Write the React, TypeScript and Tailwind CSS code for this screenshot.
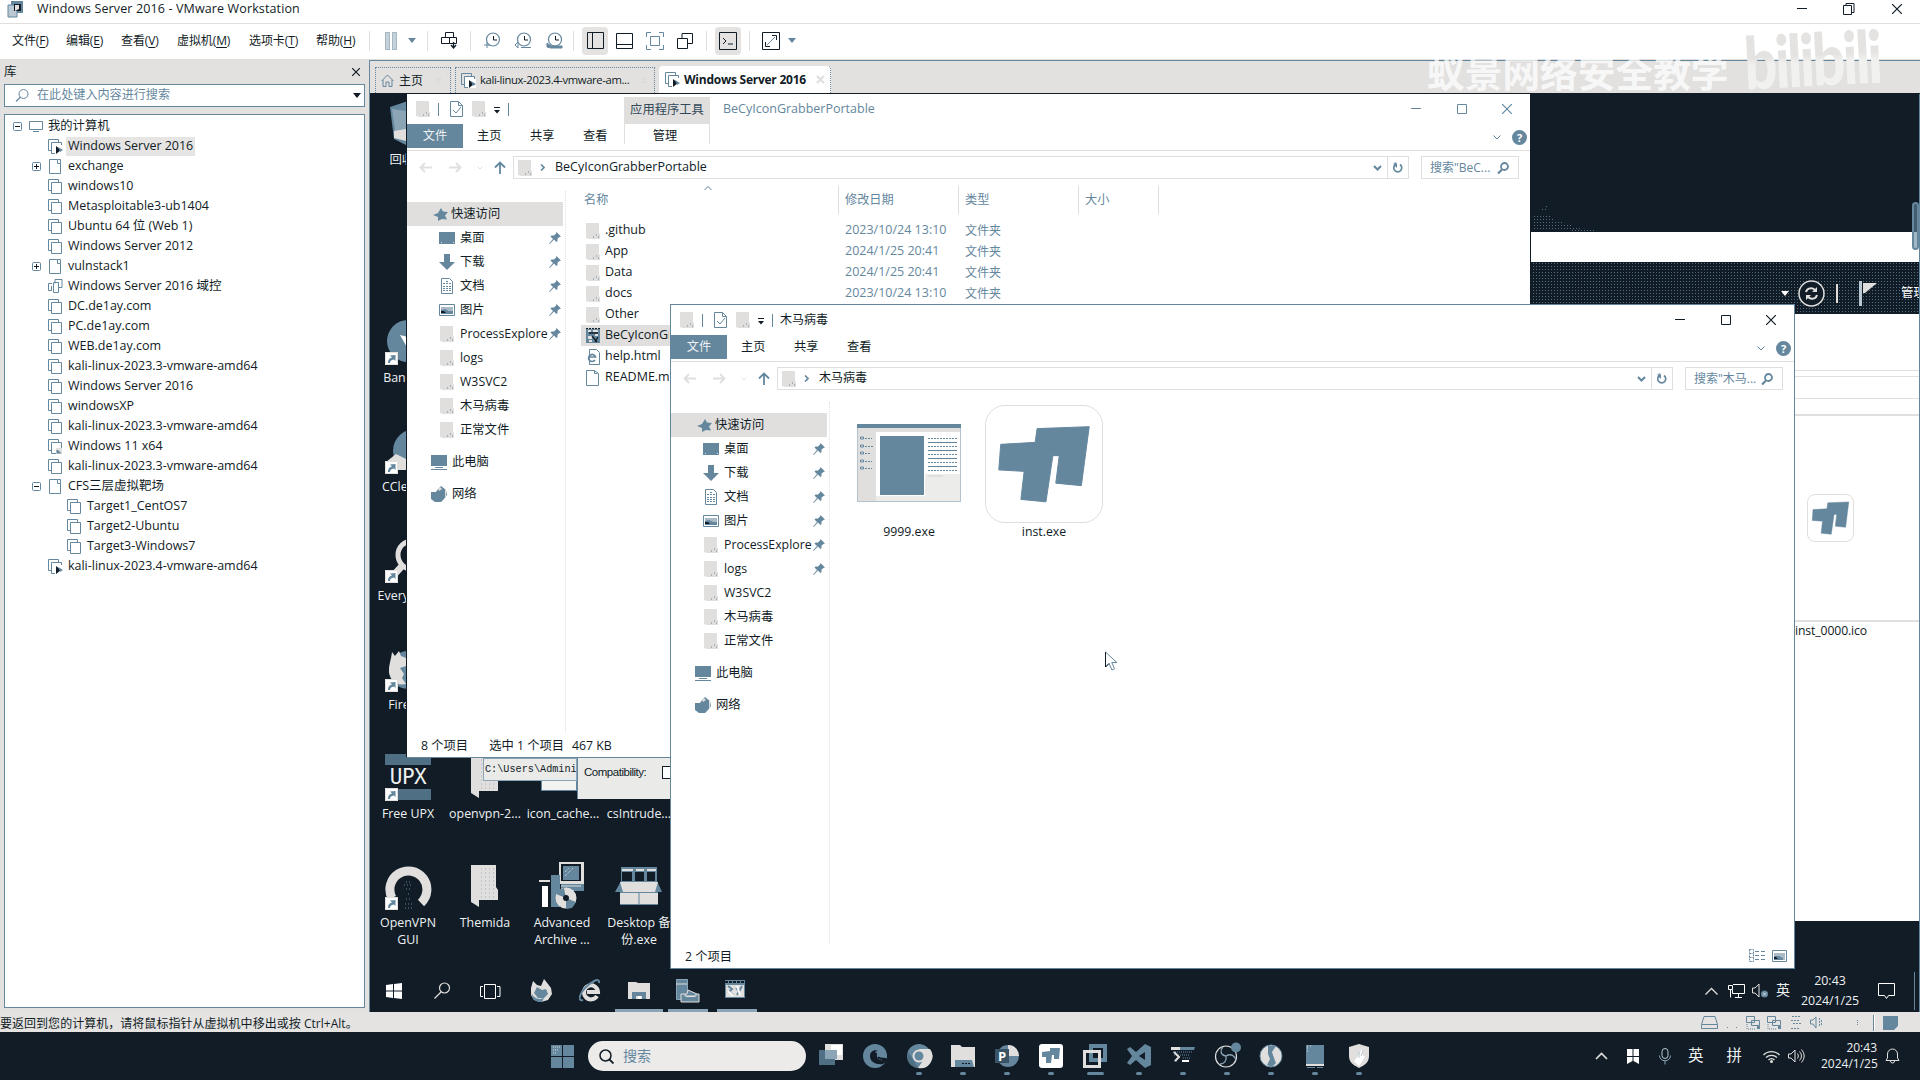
import type { ReactNode } from "react";

const B = "#64879e";
const G = "#e0dfdd";
const D = "#111c26";

type SvgProps = { w: number; h: number; children: ReactNode; className?: string };
function Svg({ w, h, children, className = "" }: SvgProps) {
  return (
    <svg width={w} height={h} viewBox={`0 0 ${w} ${h}`} fill="none" className={"shrink-0 " + className}>
      {children}
    </svg>
  );
}

/* ---------- shared small icons ---------- */
function Folder({ className = "" }: { className?: string }) {
  return (
    <Svg w={14} h={16} className={className}>
      <path d="M0 0h13v10l1 1v5H3L0 15z" fill={G} />
      <path d="M7 14h1M10 12h1M12 14h1" stroke={B} />
    </Svg>
  );
}
function CheckDoc() {
  return (
    <Svg w={13} h={16}>
      <path d="M.5.5h8l4 4v11H.5z" stroke={B} />
      <path d="M8.500 .5v4h4M3 9l3 3 5-6" stroke={B} />
    </Svg>
  );
}
function Pin() {
  return (
    <Svg w={12} h={12}>
      <path d="M7.500 0L12 4.500l-1.500.5-2 1.500v2.500l-1 1L5 7.500.5 12 0 11.500 4 7 1.500 4.500l1-1H5L7 1.500z" fill={B} />
    </Svg>
  );
}
function Caret({ color = D }: { color?: string }) {
  return (
    <Svg w={8} h={5}>
      <path d="M0 0h8L4 5z" fill={color} />
    </Svg>
  );
}
function MinIcon({ color }: { color: string }) {
  return (
    <Svg w={10} h={10}>
      <path d="M0 4.500h10" stroke={color} />
    </Svg>
  );
}
function MaxIcon({ color }: { color: string }) {
  return (
    <Svg w={10} h={10}>
      <path d="M.5.5h9v9h-9z" stroke={color} />
    </Svg>
  );
}
function CloseIcon({ color, s = 10 }: { color: string; s?: number }) {
  return (
    <Svg w={s} h={s}>
      <path d={`M0 0L${s} ${s}M${s} 0L0 ${s}`} stroke={color} strokeWidth="1.200" />
    </Svg>
  );
}
function Logo({ w, h }: { w: number; h: number }) {
  return (
    <svg width={w} height={h} viewBox="985 405 118 118" fill="none" preserveAspectRatio="none" className="shrink-0">
      <path
        d="M1000 444l35-2 2-14 53-2-8 60-26-2.500 3.500-28h-6.500l-7 47-25.500-2.500 3.300-28.500-25.800-1.500z"
        fill={B}
        stroke={B}
        strokeWidth="1"
        strokeLinejoin="round"
      />
    </svg>
  );
}

/* ---------- VMware library tree ---------- */
function VmIcon({ play = false, lock = false }: { play?: boolean; lock?: boolean }) {
  return (
    <Svg w={15} h={15}>
      <path d="M3 11.500H.5V.5h10V3" stroke={B} />
      <path d="M3.500 3.500h10v11h-10z" stroke={B} fill="#fff" />
      {play && <path d="M7 6h8v9H7z" fill="#fff" />}
      {play && <path d="M8 7l5 4-5 4z" fill={D} />}
      {play && <path d="M10 8l5 3-3 2z" fill={B} />}
      {lock && <path d="M8 9h6v6H8z" fill={G} />}
      {lock && <path d="M8.500 11v3.500h5L10 11z" fill={B} />}
    </Svg>
  );
}
function GroupIcon() {
  return (
    <Svg w={15} h={15}>
      <path d="M4 4.500H.5v7h3M3.500 12V7M7 4.500V.500h7v8h-3M5.500 3.500h5v10h-5z" stroke={B} />
    </Svg>
  );
}
function FolderOutline() {
  return (
    <Svg w={15} h={15}>
      <path d="M1.500.500h8v4h3v10h-11zM9.500.500h3v4" stroke={B} />
    </Svg>
  );
}
function Toggle({ open }: { open: boolean }) {
  return (
    <Svg w={9} h={9}>
      <rect x=".5" y=".5" width="8" height="8" rx="1" stroke={B} />
      <path d={open ? "M2 4.500h5" : "M2 4.500h5M4.500 2v5"} stroke={D} />
    </Svg>
  );
}

type Node = { t: string; k?: "play" | "lock" | "group" | "folder"; open?: boolean; sub?: boolean; sel?: boolean };
const tree: Node[] = [
  { t: "Windows Server 2016", k: "play", sel: true },
  { t: "exchange", k: "folder", open: false },
  { t: "windows10" },
  { t: "Metasploitable3-ub1404" },
  { t: "Ubuntu 64 位 (Web 1)" },
  { t: "Windows Server 2012" },
  { t: "vulnstack1", k: "folder", open: false },
  { t: "Windows Server 2016 域控", k: "group" },
  { t: "DC.de1ay.com" },
  { t: "PC.de1ay.com" },
  { t: "WEB.de1ay.com" },
  { t: "kali-linux-2023.3-vmware-amd64" },
  { t: "Windows Server 2016" },
  { t: "windowsXP" },
  { t: "kali-linux-2023.3-vmware-amd64" },
  { t: "Windows 11 x64", k: "lock" },
  { t: "kali-linux-2023.3-vmware-amd64" },
  { t: "CFS三层虚拟靶场", k: "folder", open: true },
  { t: "Target1_CentOS7", sub: true },
  { t: "Target2-Ubuntu", sub: true },
  { t: "Target3-Windows7", sub: true },
  { t: "kali-linux-2023.4-vmware-amd64", k: "play" },
];

function Library() {
  return (
    <aside className="flex h-[952px] w-[369px] shrink-0 flex-col bg-[#e2e1df] pl-1">
      <div className="flex h-6 items-center justify-between pr-[9px]">
        <span className="text-[12.500px]">库</span>
        <CloseIcon color={D} s={8} />
      </div>
      <div className="flex h-[23px] w-[361px] items-center border border-[#64879e] bg-white pl-2.5 pr-[3px]">
        <Svg w={14} h={13}>
          <circle cx="8.500" cy="5" r="4.500" stroke={B} />
          <path d="M5.500 8L1 12.500" stroke={B} strokeWidth="1.300" />
        </Svg>
        <span className="ml-2 flex-1 text-[12.100px] text-[#64879e]">在此处键入内容进行搜索</span>
        <Caret />
      </div>
      <div className="mt-[7px] h-[894px] w-[361px] border border-[#64879e] bg-white pt-px">
        <div className="flex h-5 items-center pl-2">
          <Toggle open />
          <Svg w={14} h={11} className="ml-[7px]">
            <path d="M.5.5h13v8H.5zM4 10.500h6" stroke={B} />
          </Svg>
          <span className="ml-[5px] text-[12.300px]">我的计算机</span>
        </div>
        {tree.map((n, i) => (
          <div key={i} className={"flex h-5 items-center " + (n.sub ? "pl-[62px]" : "pl-[27px]")}>
            {!n.sub && (
              <span className="flex w-4 shrink-0">{n.open !== undefined && <Toggle open={n.open} />}</span>
            )}
            {n.k === "group" ? (
              <GroupIcon />
            ) : n.k === "folder" ? (
              <FolderOutline />
            ) : (
              <VmIcon play={n.k === "play"} lock={n.k === "lock"} />
            )}
            <span
              className={
                "ml-[3px] h-[19px] whitespace-nowrap px-0.5 text-[12.500px] leading-[18px] tracking-[-0.020px] " +
                (n.sel ? "bg-[#e6e5e4]" : "")
              }
            >
              {n.t}
            </span>
          </div>
        ))}
      </div>
    </aside>
  );
}

/* ---------- VMware top bars ---------- */
const menus: [string, string, string][] = [
  ["文件", "F", "w-[54px]"],
  ["编辑", "E", "w-[55px]"],
  ["查看", "V", "w-[56px]"],
  ["虚拟机", "M", "w-[72px]"],
  ["选项卡", "T", "w-[67px]"],
  ["帮助", "H", "w-[53px]"],
];
function Sep({ className = "" }: { className?: string }) {
  return <span className={"h-5 w-px shrink-0 bg-[#e0dfdd] " + className} />;
}
function Clock({ children }: { children: ReactNode }) {
  return (
    <Svg w={17} h={17}>
      <circle cx="9" cy="7.500" r="6.500" stroke={B} strokeWidth="1.200" />
      <path d="M9.500 4v4H13" stroke={D} />
      {children}
    </Svg>
  );
}
function MenuBar() {
  return (
    <div className="flex h-9 items-center border-b border-[#e0dfdd] bg-white pb-0.5 pl-3">
      {menus.map(([a, b, w]) => (
        <span key={b} className={"shrink-0 whitespace-nowrap text-[12px] tracking-[-0.100px] " + w}>
          {a}(<span className="underline underline-offset-2">{b}</span>)
        </span>
      ))}
      <Sep />
      <Svg w={12} h={18} className="ml-[15px]">
        <path d="M.5.5h4v17h-4zM7.500.500h4v17h-4z" stroke={B} strokeDasharray="1 1" fill="#c5d0d8" />
      </Svg>
      <span className="ml-[11px]">
        <Caret color={B} />
      </span>
      <Sep className="ml-[11px]" />
      <Svg w={17} h={17} className="ml-[13px]">
        <path d="M4.500.500h8v5h-8zM.5 5.500h8v6h-8zM8.500 5.500h7v6h-7z" stroke={D} />
        <path d="M12.500 10v6M10 13l2.500 3 2.500-3" stroke={D} strokeWidth="1.300" />
      </Svg>
      <Sep className="ml-3" />
      <span className="ml-[13px] flex gap-[14px]">
        <Clock>
          <path d="M0 13h6M3 10v6" stroke={B} />
        </Clock>
        <Clock>
          <path d="M6 15.500h10M0 13l3-3v6z" stroke={B} />
        </Clock>
        <Clock>
          <path d="M1 11l4 3h11v2H5l-4-1z" fill={B} stroke={B} />
        </Clock>
      </span>
      <Sep className="ml-[10px]" />
      <span className="ml-2 flex h-7 w-[26px] shrink-0 items-center justify-center rounded-sm bg-[#e4e3e1]">
        <Svg w={17} h={17}>
          <path d="M.5.5h16v16H.5zM5.500.500v16" stroke={D} />
        </Svg>
      </span>
      <Svg w={17} h={16} className="ml-2">
        <path d="M.5.5h16v15H.5zM.5 11.500h16" stroke={D} />
      </Svg>
      <Svg w={18} h={18} className="ml-[13px]">
        <path d="M.5 5V.500H5M13 .5h4.500V5M17.500 13v4.500H13M5 17.500H.5V13M4.500 4.500h9v9h-9z" stroke={B} />
      </Svg>
      <Svg w={16} h={16} className="ml-[13px]">
        <path d="M.5 5.500h10v10H.5zM5 5V.500h10.500v10H11" stroke={D} />
      </Svg>
      <Sep className="ml-[13px]" />
      <span className="ml-2 flex h-7 w-[26px] shrink-0 items-center justify-center rounded-sm bg-[#e4e3e1]">
        <Svg w={18} h={18}>
          <path d="M.5.5h17v17H.5z" stroke={D} />
          <path d="M4 6l3 3-3 3M9 12h5" stroke={D} />
        </Svg>
      </span>
      <Sep className="ml-2" />
      <Svg w={18} h={18} className="ml-3">
        <path d="M.5.5h17v17H.5z" stroke={D} />
        <path d="M10 3.500h4.500V8M3.500 10v4.500H8" stroke={D} />
        <path d="M5 13L13 5" stroke={B} />
      </Svg>
      <span className="ml-2">
        <Caret color={B} />
      </span>
    </div>
  );
}
function TitleBar() {
  return (
    <div className="flex h-6 items-center border-b border-[#e0dfdd] bg-white pl-[7px]">
      <Svg w={16} h={17} className="-mt-1">
        <path d="M4 0h12v12H4z" fill={B} />
        <path d="M1 4h9v12H1z" fill="#b9c8d2" stroke={B} />
        <path d="M7 3h7v7H7z" fill={D} />
        <path d="M8 4h4v4l-4 2z" fill={G} />
      </Svg>
      <span className="-mt-[5px] ml-[14px] flex-1 text-[12.500px] tracking-[0.130px]">Windows Server 2016 - VMware Workstation</span>
      <div className="-mt-1.5 flex items-center pr-[18px]">
        <MinIcon color={D} />
        <Svg w={12} h={12} className="ml-[36px]">
          <path d="M.5 2.500h8v9h-8zM3 2V.500h8v9H9" stroke={D} />
        </Svg>
        <span className="ml-[37px]">
          <CloseIcon color={D} />
        </span>
      </div>
    </div>
  );
}
function TabClose() {
  return (
    <Svg w={7} h={7}>
      <path d="M1 1l5 5M6 1L1 6" stroke="#c9ced1" strokeDasharray="1 1" />
    </Svg>
  );
}
function Tabs() {
  return (
    <div className="flex h-[34px] shrink-0 items-end border-b border-t border-b-[#111c26] border-t-[#64879e] bg-[#e2e1df] pl-[5px]">
      <div className="flex h-[26px] w-[76px] items-center border-x border-t border-dotted border-[#64879e] pl-[5px]">
        <Svg w={13} h={13}>
          <path d="M.5 7l6-6 6 6M2 6v6.500h3V8h3v4.500h3V6" stroke={B} />
        </Svg>
        <span className="ml-[5px] flex-1 text-[12px]">主页</span>
        <span className="pr-2">
          <TabClose />
        </span>
      </div>
      <div className="ml-1 flex h-[26px] w-[200px] items-center border-x border-t border-dotted border-[#64879e] pl-[5px]">
        <VmIcon play />
        <span className="ml-1 flex-1 whitespace-nowrap text-[11.300px] tracking-[-0.390px]">
          kali-linux-2023.4-vmware-am...
        </span>
        <span className="pr-1.5">
          <TabClose />
        </span>
      </div>
      <div className="ml-1 flex h-[27px] w-[172px] items-center rounded-t-sm border-r border-dotted border-[#64879e] bg-white pl-1.5">
        <VmIcon play />
        <span className="ml-1 flex-1 whitespace-nowrap text-[12px] font-bold tracking-[-0.250px]">Windows Server 2016</span>
        <span className="pr-[5px]">
          <Svg w={9} h={9}>
            <path d="M1 1l7 7M8 1L1 8" stroke={G} strokeWidth="2" />
          </Svg>
        </span>
      </div>
    </div>
  );
}

/* ---------- Explorer windows ---------- */
function NavIcon({ k }: { k: string }) {
  switch (k) {
    case "desk":
      return (
        <Svg w={17} h={16}>
          <path d="M0 2h16v12H0z" fill={B} />
          <path d="M2 12.500h1M14 12.500h1" stroke={G} />
        </Svg>
      );
    case "down":
      return (
        <Svg w={17} h={16}>
          <path d="M5 0h6v8h5l-8 8-8-8h5z" fill={B} />
        </Svg>
      );
    case "doc":
      return (
        <Svg w={17} h={16}>
          <path d="M2.500.500h8l3 3v12h-11z" stroke={B} />
          <path d="M4 5.500h8M4 8.500h8M4 10.500h8M4 12.500h8M7 3.500h3" stroke={B} strokeDasharray="2 1" />
        </Svg>
      );
    case "pic":
      return (
        <Svg w={17} h={16}>
          <path d="M.5 2.500h15v11H.5z" stroke={B} />
          <path d="M2 5h12v7H2z" fill="#a9bbc7" />
          <path d="M2 8l4-1 4 2h4v3H2z" fill={B} />
          <path d="M2 9h3l2 2H2z" fill={D} />
        </Svg>
      );
    case "pc":
      return (
        <Svg w={17} h={16}>
          <path d="M0 1h16v11H0z" fill={B} />
          <path d="M4 13.500h8M0 15.500h16" stroke={B} />
        </Svg>
      );
    case "net":
      return (
        <Svg w={17} h={16}>
          <path d="M0 6h5l2-3 3-3 5 4 1 5-3 4-3 3H4l-4-3z" fill={B} />
          <path d="M7 3l2-2 2 2-3 2zM14 3l1 1v6l-1 2z" fill={G} />
        </Svg>
      );
    default:
      return (
        <span className="flex w-[17px] shrink-0 pl-[1px]">
          <Folder />
        </span>
      );
  }
}
type NavRow = [string, string];
const nav: NavRow[] = [
  ["desk", "桌面"],
  ["down", "下载"],
  ["doc", "文档"],
  ["pic", "图片"],
  ["f", "ProcessExplore"],
  ["f", "logs"],
  ["f", "W3SVC2"],
  ["f", "木马病毒"],
  ["f", "正常文件"],
];
function NavPane({ pins }: { pins: number }) {
  return (
    <div className="mt-[7px] flex w-[159px] shrink-0 flex-col border-r border-dotted border-[#e0dfdd] pt-[11px] text-[12.300px]">
      <div className="flex h-6 w-[156px] items-center bg-[#e0dfdd] pl-[26px]">
        <Svg w={15} h={13}>
          <path d="M8 0l2 3.500 5 .5-3 3.500 2 4-5-.5L5 13V9L0 7l5-2z" fill={B} />
        </Svg>
        <span className="ml-[3px]">快速访问</span>
      </div>
      {nav.map(([k, t], i) => (
        <div key={t} className="flex h-6 items-center pl-8">
          <NavIcon k={k} />
          <span className="ml-1 w-[88px] overflow-hidden whitespace-nowrap">{t}</span>
          {i < pins && (
            <span className="ml-px">
              <Pin />
            </span>
          )}
        </div>
      ))}
      <div className="mt-2 flex h-6 items-center pl-6">
        <NavIcon k="pc" />
        <span className="ml-1">此电脑</span>
      </div>
      <div className="mt-2 flex h-6 items-center pl-6">
        <NavIcon k="net" />
        <span className="ml-1">网络</span>
      </div>
    </div>
  );
}

type ExplorerProps = {
  className: string;
  active: boolean;
  path: string;
  search: string;
  pins: number;
  status: ReactNode;
  children: ReactNode;
};
function Explorer({ className, active, path, search, pins, status, children }: ExplorerProps) {
  const c = active ? D : B;
  return (
    <section className={"absolute flex h-[665px] w-[1125px] flex-col border bg-white " + className}>
      <header className="flex h-[30px] shrink-0 items-center pl-[9px] pr-[18px]">
        <Folder />
        <span className="ml-2 h-[13px] w-px bg-[#64879e]" />
        <span className="ml-[11px]">
          <CheckDoc />
        </span>
        <Folder className="ml-[9px]" />
        <Svg w={8} h={8} className="ml-[7px] mt-[3px]">
          <path d="M1 .5h6" stroke={D} />
          <path d="M1 3h6L4 6.500z" fill={D} />
        </Svg>
        <span className="ml-[7px] h-[13px] w-px bg-[#64879e]" />
        {active ? (
          <span className="ml-[7px] text-[12px]">{path}</span>
        ) : (
          <>
            <span className="ml-[115px] flex h-[27px] w-[86px] items-center justify-center self-end bg-[#e0dfdd] text-[12.300px] leading-none text-[#33495a]">
              应用程序工具
            </span>
            <span className="ml-[13px] text-[12.500px] text-[#64879e]">{path}</span>
          </>
        )}
        <span className="-mt-px ml-auto flex items-center gap-[35.500px]">
          <MinIcon color={c} />
          <MaxIcon color={c} />
          <CloseIcon color={c} />
        </span>
      </header>
      <div className="flex h-[27px] shrink-0 border-b border-[#e0dfdd] pr-[3px] text-[12.200px] leading-6">
        <span className="h-6 w-14 bg-[#64879e] text-center text-[#eef1f2]">文件</span>
        <span className="ml-[14px] w-[53px]">主页</span>
        <span className="w-[53px]">共享</span>
        <span className="w-[41px]">查看</span>
        {!active && <span className="h-5 w-[86px] border-x border-[#e0dfdd] text-center -indent-1">管理</span>}
        <span className="ml-auto flex items-center gap-[11px]">
          <Svg w={8} h={5}>
            <path d="M.5.500L4 4 7.500.500" stroke={B} />
          </Svg>
          <span className="flex size-[15px] items-center justify-center rounded-full bg-[#64879e] text-[11px] font-bold leading-none text-white">
            ?
          </span>
        </span>
      </div>
      <div className="flex h-[33px] shrink-0 items-center pl-3">
        <Svg w={13} h={11}>
          <path d="M13 5.500H1M6 1L1.500 5.500 6 10" stroke={G} strokeWidth="1.800" />
        </Svg>
        <Svg w={13} h={11} className="ml-[17px]">
          <path d="M0 5.500h12M7 1l4.500 4.500L7 10" stroke={G} strokeWidth="1.800" />
        </Svg>
        <Svg w={6} h={4} className="ml-[15px]">
          <path d="M.5.500L3 3 5.500.500" stroke={G} />
        </Svg>
        <Svg w={12} h={13} className="ml-[11px]">
          <path d="M6 13V1.500M1 6.500l5-5 5 5" stroke={B} strokeWidth="1.800" />
        </Svg>
        <div className="ml-[7px] flex h-[23px] w-[896px] items-center border border-[#e0dfdd] pl-1">
          <Folder />
          <Svg w={5} h={7} className="ml-2">
            <path d="M1 .5l3 3-3 3" stroke={B} strokeWidth="1.600" />
          </Svg>
          <span className="ml-[10px] flex-1 text-[12.500px]">{path === "木马病毒" ? <span className="text-[12px]">{path}</span> : path}</span>
          <Svg w={9} h={6}>
            <path d="M1 1l3.500 3.500L8 1" stroke={B} strokeWidth="2" />
          </Svg>
          <span className="ml-[5px] flex h-full w-[21px] items-center border-l border-[#e0dfdd] pl-1">
            <Svg w={11} h={12}>
              <path d="M8 2.500a4 4 0 1 1-4.500 0M3.500.500v4" stroke={B} strokeWidth="1.700" />
              <path d="M1 1.500h4V6z" fill={B} />
            </Svg>
          </span>
        </div>
        <div className="ml-3 flex h-[23px] w-[98px] items-center justify-between border border-[#e0dfdd] pl-2 pr-[9px] text-[12px] text-[#64879e]">
          <span className="whitespace-nowrap">{search}</span>
          <Svg w={12} h={12}>
            <circle cx="7.500" cy="4.500" r="3.500" stroke={B} strokeWidth="1.800" />
            <path d="M5 7.500L1 11.500" stroke={B} strokeWidth="2.200" />
          </Svg>
        </div>
      </div>
      <div className="flex min-h-0 flex-1">
        <NavPane pins={pins} />
        {children}
      </div>
      <footer className="flex h-6 shrink-0 items-center pl-[14px] pr-[7px] pt-0.5 text-[12.300px] leading-5">{status}</footer>
    </section>
  );
}

const files: [string, string, string][] = [
  [".github", "2023/10/24 13:10", "f"],
  ["App", "2024/1/25 20:41", "f"],
  ["Data", "2024/1/25 20:41", "f"],
  ["docs", "2023/10/24 13:10", "f"],
  ["Other", "", "f"],
  ["BeCyIconGrabberPortable.exe", "", "exe"],
  ["help.html", "", "html"],
  ["README.md", "", "md"],
];
function FileIcon({ k }: { k: string }) {
  if (k === "exe")
    return (
      <Svg w={15} h={16}>
        <path d="M0 1h14v14H0z" fill={B} />
        <path d="M2 2h3v2H2zM7 2h5v2H7zM2 8h4v3H2zM9 6h3v2H9zM3 12h3v2H3z" fill={G} />
        <path d="M0 .5h14" stroke={D} strokeDasharray="2 1" />
        <path d="M3 5h9M6 8l5 6M12 9l-3 5" stroke={D} strokeWidth="1.300" />
      </Svg>
    );
  if (k === "html")
    return (
      <Svg w={15} h={16}>
        <path d="M3.500.500h7l3 3v12h-10z" stroke={B} fill="#fff" />
        <path d="M9 11a3.500 3.500 0 1 1 .5-3H3" stroke={B} strokeWidth="1.700" />
      </Svg>
    );
  if (k === "md")
    return (
      <Svg w={15} h={16}>
        <path d="M.5.500h8l4 3v12H.5zM8.500.500v3h3" stroke={B} />
      </Svg>
    );
  return (
    <span className="flex w-[15px] shrink-0">
      <Folder />
    </span>
  );
}
function FileList() {
  return (
    <div className="ml-[15px] flex flex-1 flex-col pt-0.5">
      <div className="grid h-[27px] grid-cols-[258px_120px_120px_80px] text-[12.200px] leading-[28px] text-[#64879e]">
        <span className="relative border-r border-[#e0dfdd] pl-[3px]">
          名称
          <Svg w={8} h={5} className="absolute left-[123px] top-0">
            <path d="M.5 4L4 .5 7.500 4" stroke={B} />
          </Svg>
        </span>
        <span className="border-r border-[#e0dfdd] pl-1.5">修改日期</span>
        <span className="border-r border-[#e0dfdd] pl-1.5">类型</span>
        <span className="border-r border-[#e0dfdd] pl-1.5">大小</span>
      </div>
      <div className="mt-[7px]">
        {files.map(([n, d, k]) => (
          <div
            key={n}
            className={
              "grid h-[21px] grid-cols-[258px_120px_120px] items-center text-[12.500px] " + (k === "exe" ? "bg-[#e0dfdd]" : "")
            }
          >
            <span className="flex items-center whitespace-nowrap pl-[5px]">
              <FileIcon k={k} />
              <span className="ml-1 max-w-[64px] overflow-hidden">{n}</span>
            </span>
            <span className="pl-[6px] text-[#64879e]">{d}</span>
            <span className="pl-[6px] text-[12px] text-[#64879e]">{d ? "文件夹" : ""}</span>
          </div>
        ))}
      </div>
    </div>
  );
}
function Thumbs() {
  const ys = [4, 8, 12, 16, 20, 24, 28, 32, 36];
  return (
    <div className="flex pl-[27px] pt-[10px] text-center text-[12.300px]">
      <div className="flex w-[104px] flex-col items-center">
        <Svg w={104} h={78} className="mt-[19px]">
          <path d="M0 0h104v78H0z" fill="#fff" />
          <path d="M.5.5h103v77H.5z" stroke={B} strokeDasharray="1 1" />
          <path d="M1 4h102v4H1zM1 8h18v69H1z" fill={G} />
          <path d="M0 0h104v4H0z" fill={B} />
          <path d="M68 50h35v27H19v-5h49z" fill="#ececeb" />
          <path d="M23 12h44v59H23z" fill={B} />
          {ys.map((y) => (
            <path key={y} d={`M71 ${y + 10.5}h29`} stroke={B} strokeDasharray={y % 8 ? "2 1" : undefined} />
          ))}
          <path d="M71 52h15" stroke={G} strokeWidth="2" />
          <path d="M3.500 13h3v2h-3zM3.500 21h3v2h-3zM3.500 28h3v2h-3zM3.500 36h3v2h-3zM3.500 43h3v2h-3z" stroke={B} />
          <path d="M8 14.500h7M8 22.500h8M8 29.500h5M8 37.500h7M8 44.500h7" stroke={B} strokeDasharray="2 1" />
        </Svg>
        <span className="mt-[21px]">9999.exe</span>
      </div>
      <div className="ml-6 flex w-[118px] flex-col items-center">
        <div className="flex size-[118px] items-center justify-center rounded-[20px] border border-[#e0dfdd]">
          <Logo w={116} h={116} />
        </div>
        <span>inst.exe</span>
      </div>
    </div>
  );
}

/* ---------- guest desktop ---------- */
function Shortcut() {
  return (
    <Svg w={13} h={13}>
      <path d="M0 0h13v13H0z" fill="#fff" />
      <path d="M.5.5h12v12H.5z" stroke={G} />
      <path d="M3 11c0-4 2-5 4-5.500L5 3.500 10.500 3v6L9 7.500C6 8 5 9 5 11z" fill={B} />
    </Svg>
  );
}
function DeskItem({ className, label, icon, short }: { className: string; label: string; icon?: ReactNode; short?: boolean }) {
  return (
    <div className={"absolute flex w-[78px] flex-col items-center text-center text-[12.400px] leading-[17px] text-[#eef1f2] " + className}>
      <div className="relative flex h-12 w-[50px] items-center justify-center">
        {icon}
        {short && (
          <span className="absolute bottom-0 left-0.5">
            <Shortcut />
          </span>
        )}
      </div>
      <span className="mt-1 whitespace-pre">{label}</span>
    </div>
  );
}
function BigFolder() {
  return (
    <Svg w={28} h={42}>
      <path d="M0 0h25v22l2 3v10H8v7l-8-5z" fill={G} />
      <path d="M10 4h14M10 8h14M10 12h14M10 16h14M10 20h14M10 24h14M10 28h16M10 32h16" stroke="#9fb2bf" strokeDasharray="1 3" />
    </Svg>
  );
}
function Ring() {
  return (
    <Svg w={48} h={48}>
      <path d="M8 36A18.500 18.500 0 1 1 37 41" stroke={G} strokeWidth="9" />
      <path d="M22 20h6M20 23h9M22 27h6M24 32h2M22 37h5M21 42h8M21 46h8" stroke={B} strokeDasharray="1 2" />
    </Svg>
  );
}

function GuestTaskbar() {
  return (
    <div className="absolute inset-x-0 bottom-0 flex h-[42px] bg-[#111c26]">
      <Svg w={17} h={16} className="ml-4 mt-[13px]">
        <path d="M0 2l7-1v6.500H0zM8 1l8-1v7.500H8zM0 8.500h7V15l-7-1zM8 8.500h8V16l-8-1z" fill="#fff" />
      </Svg>
      <Svg w={17} h={17} className="ml-[31px] mt-3">
        <circle cx="10.500" cy="6" r="5" stroke={G} strokeWidth="1.200" />
        <path d="M7 10L.5 16.500" stroke={G} strokeWidth="1.300" />
      </Svg>
      <Svg w={21} h={15} className="ml-[29px] mt-[14px]">
        <path d="M4.500.500h11v14h-11zM3 2.500H.5v10H3M17 2.500h3v10h-3" stroke="#fff" />
      </Svg>
      <Svg w={22} h={23} className="ml-[29px] mt-[9px]">
        <path d="M1 9l2-7 4 4 4 1 3-7 4 5 3 4 1 6-4 6-7 2-7-2-3-5z" fill={G} />
        <path d="M7 8l5 3 4-1 2 5-4 4H8l-4-5z" fill={B} />
        <path d="M1 12c1 5 5 8 9 8l4-1-2 4H8l-5-3z" fill={B} />
      </Svg>
      <Svg w={22} h={23} className="ml-[27px] mt-[9px]">
        <path d="M18 17a7 7 0 1 1 1-4H8" stroke={G} strokeWidth="4" />
        <path d="M4 21c-6 2-3-7 2-12S21-3 20 4" stroke={B} strokeWidth="2" />
      </Svg>
      <span className="ml-[14px] flex h-[42px] w-12 flex-col items-center justify-between border-b-[3px] border-[#8ba5b6] pt-3">
        <Svg w={22} h={18}>
          <path d="M0 0h8l2 1h12v16H0z" fill={G} />
          <path d="M4 10h14v7h-4v-3H8v3H4z" fill={B} />
          <path d="M10 14h3v3h-3z" fill="#fff" />
        </Svg>
      </span>
      <span className="ml-[5px] flex h-[42px] w-10 flex-col items-center border-b-[3px] border-[#8ba5b6] pt-[9px]">
        <Svg w={24} h={24}>
          <path d="M.5.5h11v20H.5z" fill={B} stroke="#8ba5b6" />
          <path d="M0 5h11" stroke={G} />
          <path d="M12 11l9 4h2v8H5v-8h6z" fill={B} stroke={G} />
          <path d="M9 15v2h11v-2M10 17.500h9" stroke={G} />
        </Svg>
      </span>
      <span className="ml-[9px] flex h-[42px] w-10 flex-col items-center border-b-[3px] border-[#8ba5b6] pr-1 pt-[10px]">
        <Svg w={20} h={19}>
          <path d="M0 0h20v18H0z" fill={B} />
          <path d="M1 5h18v12H1z" fill={G} />
          <path d="M0 2h19" stroke={D} strokeWidth="2" strokeDasharray="3 1" />
          <path d="M3 6l4 3-3 3 4 3M12 15l5-9M11 8l3 3" stroke={B} strokeWidth="2" />
          <path d="M3 11l5 5M12 6l3 9" stroke="#fff" strokeWidth="2" />
        </Svg>
      </span>
      <div className="ml-auto flex text-[12.400px] text-[#eef1f2]">
        <Svg w={13} h={8} className="mt-[17px]">
          <path d="M.5 7.500l6-6 6 6" stroke={G} strokeWidth="1.300" />
        </Svg>
        <Svg w={17} h={15} className="ml-[10px] mt-[14px]">
          <path d="M5 .5h11.500v9H4.500V6M7 13.500h7M10.500 10v3M.5 1.500h4v4h-4zM2.500 6v7.500" stroke="#fff" />
        </Svg>
        <Svg w={17} h={15} className="ml-[7px] mt-[13px]">
          <path d="M.5 5v5H3l4 4V1L3 5z" stroke={G} />
          <circle cx="12.500" cy="11" r="3.500" fill={B} />
          <path d="M11 9.500l3 3M14 9.500l-3 3" stroke={G} />
        </Svg>
        <span className="ml-[7px] mt-[10px] text-[14px] leading-5">英</span>
        <div className="ml-[9px] mt-px w-[62px] text-center leading-5">
          <div>20:43</div>
          <div className="tracking-[-0.100px]">2024/1/25</div>
        </div>
        <Svg w={17} h={17} className="ml-[17px] mt-[13px]">
          <path d="M.5.5h16v12h-6l-2 3-2-3h-6z" stroke="#fff" />
        </Svg>
        <span className="ml-[19px] mr-1 mt-0.5 h-[38px] w-px bg-[#64879e]" />
      </div>
    </div>
  );
}

function Guest() {
  return (
    <div className="relative h-[918px] overflow-hidden border-r border-[#64879e] bg-[#111c26]">
      {/* terminal and server manager windows partly hidden at the right */}
      <div className="absolute left-[1159px] right-0 top-[138px] h-[689px] bg-white">
        <div className="mt-[30px] flex h-[52px] items-center justify-end bg-[#111c26] bg-[radial-gradient(#4f7084_0.700px,transparent_0.800px)] bg-[size:3px_3px] pt-2.5">
          <Caret color="#fff" />
          <Svg w={27} h={27} className="ml-[9px]">
            <circle cx="13.500" cy="13.500" r="12.500" fill={D} stroke={G} strokeWidth="1.500" />
            <path d="M8 12c1-4 6-5 9-2M19 15c-1 4-6 5-9 2" stroke={G} strokeWidth="2" />
            <path d="M19 7v5h-5zM8 20v-5h5z" fill={G} />
          </Svg>
          <span className="ml-[11px] h-[19px] w-0.5 bg-[#e0dfdd]" />
          <Svg w={18} h={25} className="ml-[21px]">
            <path d="M1.500 0v25" stroke="#b9c8d2" strokeWidth="3" />
            <path d="M4 2h14L6 12H4z" fill={G} />
          </Svg>
          <span className="ml-[24px] w-[18px] overflow-hidden whitespace-nowrap text-[12.500px] text-white">管理</span>
        </div>
        <div className="ml-[266px] h-[57px] border-b border-[#e0dfdd]" />
        <div className="ml-[266px] h-[6px] border-b border-[#e0dfdd]" />
        <div className="ml-[266px] h-[22px] border-b border-[#e0dfdd]" />
        <div className="ml-[266px] h-[17px] border-b-2 border-[#e0dfdd]" />
        <div className="ml-[266px] h-[206px] border-b-2 border-[#e0dfdd] pl-[12px] pt-[78px]">
          <div className="flex h-12 w-[47px] items-center justify-center rounded-lg border border-[#e0dfdd]">
            <Logo w={47} h={50} />
          </div>
        </div>
        <div className="ml-[266px] text-[12.200px] tracking-[-0.100px]">inst_0000.ico</div>
      </div>
      <Svg w={70} h={26} className="absolute left-[1162px] top-[112px]">
        <path d="M2 22.500h46M2 19.500h38M2 16.500h28M2 13.500h20M2 10.500h16M10 3.500h6M14 .5h2M40 24.500h24" stroke="#4f7084" strokeDasharray="1 2" />
      </Svg>
      <span className="absolute right-0 top-[108px] h-12 w-[7px] rounded-full border-2 border-[#64879e] bg-[#64879e]/60" />

      <DeskItem
        className="-left-px top-[5px]"
        label="回收站"
        icon={
          <Svg w={40} h={44}>
            <path d="M2 6l18-6 18 4-4 36-16 4L6 38z" fill={B} />
            <path d="M4 8l14 2 2 28-12-2z" fill="#8ba5b6" />
            <path d="M6 30l12-2v12l-12-3z" fill={G} />
          </Svg>
        }
      />
      <DeskItem
        className="-left-px top-[223px]"
        label="Bandizip"
        short
        icon={
          <Svg w={44} h={44}>
            <circle cx="22" cy="22" r="21" fill={B} />
            <path d="M14 16l8 2v12z" fill="#fff" />
          </Svg>
        }
      />
      <DeskItem
        className="-left-px top-[332px]"
        label="CCleaner"
        short
        icon={
          <Svg w={44} h={44}>
            <path d="M22 2a22 22 0 0 0-13 30l13 10z" fill={B} />
            <path d="M0 34l10-8 12 6v10H8z" fill={G} />
          </Svg>
        }
      />
      <DeskItem
        className="-left-px top-[441px]"
        label="Everything"
        short
        icon={
          <Svg w={44} h={44}>
            <circle cx="26" cy="18" r="14" stroke={G} strokeWidth="5" />
            <path d="M16 29L6 40" stroke={G} strokeWidth="7" />
          </Svg>
        }
      />
      <DeskItem
        className="-left-px top-[550px]"
        label="Firefox"
        short
        icon={
          <Svg w={44} h={44}>
            <circle cx="22" cy="24" r="19" fill={B} />
            <path d="M3 26c0-8 2-12 3-20l3 4 4-5 2 5 5 2v8l-6 2 4 6-2 4 4 6C10 40 4 34 3 26z" fill={G} />
          </Svg>
        }
      />
      <DeskItem
        className="-left-px top-[659px]"
        label="Free UPX"
        short
        icon={
          <div className="flex h-[46px] w-[46px] flex-col items-center justify-between">
            <span className="h-[11px] w-full bg-[#4f7084]" />
            <span className="font-['DejaVu_Sans_Mono'] text-[21px] leading-none tracking-tight">UPX</span>
            <span className="h-[11px] w-full bg-[#4f7084]" />
          </div>
        }
      />
      <DeskItem className="left-[76px] top-[659px]" label="openvpn-2..." icon={<BigFolder />} />
      <DeskItem className="left-[154px] top-[659px]" label="icon_cache..." />
      <DeskItem className="left-[230px] top-[659px]" label="csIntrude..." />
      <DeskItem className="-left-px top-[768px]" label={"OpenVPN\nGUI"} short icon={<Ring />} />
      <DeskItem className="left-[76px] top-[768px]" label="Themida" icon={<BigFolder />} />
      <DeskItem
        className="left-[153px] top-[768px]"
        label={"Advanced\nArchive ..."}
        icon={
          <Svg w={46} h={48}>
            <path d="M20 0h25v22H20z" fill={G} />
            <path d="M22 2h20v17H22z" fill={D} />
            <path d="M24 4h16v14H24z" fill={B} />
            <path d="M26 14l8-8M26 10l4-4" stroke={G} strokeDasharray="1 1" />
            <path d="M12 13h9v32h-9z" fill={B} />
            <path d="M22 22h23v7H22z" fill={B} />
            <path d="M22 24h20" stroke={G} />
            <path d="M0 19h11" stroke={G} strokeWidth="2" />
            <path d="M3 24h6v21H3z" fill="#fff" />
            <circle cx="27" cy="36" r="10.500" fill={G} />
            <path d="M27 36l-10-4 2-4 6-2zM27 36l10 4-4 6-6 1z" fill={B} />
            <circle cx="27" cy="36" r="3" fill={D} />
          </Svg>
        }
      />
      <DeskItem
        className="left-[230px] top-[768px]"
        label={"Desktop 备\n份.exe"}
        icon={
          <Svg w={48} h={40}>
            <path d="M6 1h36v18H6z" fill={B} />
            <path d="M7 4h11M21 4h8M32 4h9" stroke={G} strokeWidth="2" />
            <path d="M7 6h10v9H7zM20 6h9v9h-9zM32 6h8v9h-8z" fill={D} />
            <path d="M0 26l6-11h36l5 11z" fill={B} />
            <path d="M5 16h38l-3 10H8z" fill={G} />
            <path d="M5 27h38v11H5z" fill={G} />
            <path d="M24 26v12M5 38.500h38M5 26.500h38" stroke={B} />
          </Svg>
        }
      />

      <span className="absolute left-[171px] top-[680px] h-[17px] w-9 border border-[#64879e] bg-[#f2f2f1]" />
      <span className="absolute left-[113px] top-[664px] h-[23px] w-[94px] overflow-hidden whitespace-nowrap border border-[#8ba5b6] bg-[#eaeae8] pl-px font-['Liberation_Mono'] text-[10.200px] leading-[22px]">
        C:\Users\Admini
      </span>
      <span className="absolute left-[207px] top-[664px] flex h-[41px] w-24 border-l border-[#64879e] bg-[#eaeae8] pl-1.5 pt-[7px] font-['Liberation_Sans'] text-[11.500px] leading-[15px] tracking-[-0.480px]">
        Compatibility:
        <span className="ml-4 mt-px size-[13px] border border-[#111c26] bg-white" />
      </span>

      <GuestTaskbar />

      <Explorer
        className="-top-px left-9 border-[#111c26] border-b-[#64879e]"
        active={false}
        path="BeCyIconGrabberPortable"
        search={'搜索"BeC...'}
        pins={5}
        status={
          <>
            <span>8 个项目</span>
            <span className="ml-[21px]">选中 1 个项目</span>
            <span className="ml-2">467 KB</span>
          </>
        }
      >
        <FileList />
      </Explorer>
      <Explorer
        className="left-[300px] top-[210px] border-[#64879e]"
        active
        path="木马病毒"
        search={'搜索"木马...'}
        pins={6}
        status={
          <>
            <span>2 个项目</span>
            <Svg w={16} h={14} className="-mt-0.5 ml-auto">
              <path d="M.5.5h4v12h-4zM.5 4.500h4M.5 8.500h4" stroke={B} strokeDasharray="2 1" />
              <path d="M6 2.500h10M6 6.500h10M6 10.500h10" stroke={B} strokeDasharray="4 2" />
            </Svg>
            <Svg w={15} h={12} className="-mt-0.5 ml-[7px]">
              <path d="M.5.5h14v11H.5z" stroke={B} />
              <path d="M2 3h11v7H2z" fill="#a9bbc7" />
              <path d="M2 6h5l4 2v2H2z" fill={B} />
              <path d="M2 7h2l2 2H2z" fill={D} />
            </Svg>
          </>
        }
      >
        <Thumbs />
      </Explorer>
      <Svg w={14} h={21} className="absolute left-[735px] top-[557px]">
        <path d="M.5 1v15l3.500-3.500 3 6.500 2.500-1.200L6.800 11.500h5z" fill="#fff" stroke={B} />
        <path d="M.5 1v15l3.500-3.500" stroke={D} />
      </Svg>
    </div>
  );
}

/* ---------- VMware status bar and host taskbar ---------- */
function StatusBar() {
  return (
    <div className="flex h-5 shrink-0 items-center bg-[#e4e3e1] text-[12px]">
      <span className="whitespace-nowrap pt-[3px] leading-[17px] tracking-[0.030px]">要返回到您的计算机，请将鼠标指针从虚拟机中移出或按 Ctrl+Alt。</span>
      <div className="ml-auto flex items-center pt-px">
        <Svg w={17} h={13}>
          <path d="M3 .5h11l2.500 8v4H.5v-4zM.5 8.500h16" stroke={B} />
        </Svg>
        <Svg w={12} h={13} className="ml-[8px]">
          <path d="M1 11.500h1M10 11.500h1" stroke={B} />
        </Svg>
        {[0, 1].map((i) => (
          <Svg key={i} w={15} h={14} className={i ? "ml-1.5" : "ml-[8px]"}>
            <path d="M.5.500h8v6h-8zM5.500 4.500h8v5h-8z" stroke={B} />
            <path d="M1 8v5h8" stroke={B} strokeDasharray="1 1" />
            <path d="M11 10h3v3h-3z" fill={B} />
          </Svg>
        ))}
        <Svg w={14} h={13} className="ml-[7px]">
          <path d="M3 .5h8M2 4.500h9M4 7.500h9M2 12.500h9" stroke={B} strokeDasharray="2 1" />
        </Svg>
        <Svg w={13} h={13} className="ml-[7px]">
          <path d="M.5 4v4H3l3 4V1L3 4z" stroke={B} />
          <path d="M9.500 2v9M11.500 4v6" stroke={B} strokeDasharray="2 1" />
        </Svg>
        <Svg w={2} h={6} className="ml-[34px]">
          <path d="M.5 0v6" stroke={B} strokeDasharray="1 1" />
        </Svg>
        <span className="ml-[14px] h-4 w-0.5 border-l border-[#64879e] bg-white" />
        <Svg w={15} h={14} className="ml-2 mr-[22px]">
          <path d="M0 0h15v10l-4 4H0z" fill={B} />
        </Svg>
      </div>
    </div>
  );
}

const apps: { dot: string; icon: ReactNode }[] = [
  {
    dot: "",
    icon: (
      <>
        <path d="M6 0h18v16H6z" fill={G} />
        <path d="M12 1h11v10H12z" fill="#fff" />
        <path d="M0 6h16v15H0z" fill="#4f7084" />
        <path d="M6 6h12v9H6z" fill="#8ba5b6" />
      </>
    ),
  },
  {
    dot: "",
    icon: (
      <>
        <circle cx="12" cy="12" r="12" fill={B} />
        <path d="M24 14c-3 3-9 3-10-1-1-3 2-4 1-6-3-2-8 0-8 5 0 6 6 9 13 8l4-3z" fill={D} />
        <path d="M12 8c3-2 12-1 12 5-2 3-8 3-9 0 1-2-1-4-3-5z" fill={B} />
        <path d="M15 13c1 2 5 2 8 2" stroke={D} strokeWidth="2" />
      </>
    ),
  },
  {
    dot: "w-1.5",
    icon: (
      <>
        <circle cx="12" cy="12" r="12" fill={B} />
        <path d="M12 5h11a12 12 0 0 1-12 19l6-9z" fill={G} />
        <path d="M1 8l6 9 4 7A12 12 0 0 1 1 8z" fill="#4f7084" />
        <circle cx="12" cy="12" r="6.500" fill={G} />
        <circle cx="12" cy="12" r="4.500" fill={B} />
      </>
    ),
  },
  {
    dot: "w-1.5",
    icon: (
      <>
        <path d="M0 1h9l2 2h13v20H0z" fill={G} />
        <path d="M4 16h17l2 7H4z" fill={B} />
        <path d="M11 19.500h8" stroke={D} strokeDasharray="2 1" />
      </>
    ),
  },
  {
    dot: "w-1.5",
    icon: (
      <>
        <circle cx="13" cy="12" r="11" fill={B} />
        <path d="M13 1a11 11 0 0 1 11 11H13z" fill={G} />
        <path d="M0 5h14v14H0z" fill="#3a5465" />
        <text x="3" y="17" fontSize="13" fontWeight="bold" fill="#fff" fontFamily="Open Sans">
          P
        </text>
      </>
    ),
  },
  {
    dot: "w-1.5",
    icon: (
      <>
        <rect width="24" height="24" rx="3" fill="#fff" />
        <path d="M3 8l8-1V4h10l-1 11h-5v-4h-2l-1 8H7v-6H3z" fill={B} />
      </>
    ),
  },
  {
    dot: "w-[17px]",
    icon: (
      <>
        <path d="M8 2h14v14H8z" stroke={B} strokeWidth="4" />
        <path d="M1.500 7.500h15v15h-15z" stroke={G} strokeWidth="3" />
        <path d="M8 9v7h7" stroke={B} strokeWidth="3" />
      </>
    ),
  },
  {
    dot: "w-1.5",
    icon: (
      <path d="M18 0l6 3v18l-6 3-9-8-6 5-3-2 5-7-5-7 3-2 6 5zM18 8l-6 4 6 4z" fill={B} fillRule="evenodd" />
    ),
  },
  {
    dot: "w-1.5",
    icon: (
      <>
        <path d="M0 3h9v3H0z" fill={G} />
        <path d="M9 3h15l-1 3H9z" fill={B} />
        <path d="M2 8h20M3 11h16M12 14h7M3 17h3" stroke="#3a5465" strokeWidth="2" strokeDasharray="1 1" />
        <path d="M3 8l5 5-4 4" stroke={G} strokeWidth="2" />
        <path d="M11 17h7" stroke="#fff" strokeWidth="2" />
      </>
    ),
  },
  {
    dot: "w-1.5",
    icon: (
      <>
        <circle cx="11" cy="12.500" r="10.500" stroke={G} strokeWidth="1.200" />
        <path d="M11 12C5 11 5 6 8 3M11 12c5-3 9 0 10 4M11 12c1 5-2 8-6 8" stroke="#8ba5b6" strokeWidth="1.300" />
        <circle cx="21" cy="3.500" r="5" fill={B} />
      </>
    ),
  },
  {
    dot: "w-1.5",
    icon: (
      <>
        <circle cx="12" cy="12" r="11" fill={G} stroke={B} />
        <path d="M9 2h8l-4 6 2 6 2 5-4 4-5-2 3-6-2-5z" fill={B} />
      </>
    ),
  },
  {
    dot: "w-1.5",
    icon: (
      <>
        <path d="M3 1h18v19H3z" fill={B} />
        <path d="M3 20h18v2H3z" fill={G} />
        <path d="M4 2h6M4 4h3M4 7h1" stroke={G} strokeDasharray="1 2" />
        <path d="M4 23.500h16" stroke={B} strokeDasharray="8 2" />
      </>
    ),
  },
  {
    dot: "w-1.5",
    icon: (
      <>
        <path d="M2 3l10-3 10 3v9c0 6-4 9-10 12C6 21 2 18 2 12z" fill={G} />
        <path d="M15 4v6l3 3-6 9-5-5 5-6z" fill="#fff" />
        <path d="M12 8v6M16 6l-2 6" stroke="#b9c8d2" />
      </>
    ),
  },
];

function HostTaskbar() {
  return (
    <div className="flex h-12 shrink-0 items-center bg-[#111c26] pl-[551px] text-[#eef1f2]">
      <Svg w={23} h={23}>
        <path d="M0 0h11v11H0zM12 0h11v11H12zM0 12h11v11H0zM12 12h11v11H12z" fill={B} />
        <path d="M2 2h7M2 5h5M2 8h3" stroke={G} strokeDasharray="1 1" />
      </Svg>
      <div className="ml-3.5 flex h-[30px] w-[218px] items-center rounded-full bg-[#ecebea] pl-[11px]">
        <Svg w={15} h={15}>
          <circle cx="6.500" cy="6.500" r="5.500" stroke={D} strokeWidth="1.500" />
          <path d="M10.500 10.500l4 4" stroke={D} strokeWidth="1.800" />
        </Svg>
        <span className="-mt-0.5 ml-[9px] text-[14px] text-[#64879e]">搜索</span>
      </div>
      <div className="ml-[3px] flex">
        {apps.map((a, i) => (
          <span key={i} className="flex h-12 w-11 flex-col items-center pt-3">
            <Svg w={24} h={24} className="overflow-visible">
              {a.icon}
            </Svg>
            {a.dot && <span className={"mt-1 h-[3px] rounded-full bg-[#64879e] " + a.dot} />}
          </span>
        ))}
      </div>
      <div className="ml-auto flex items-center pr-5">
        <Svg w={13} h={8}>
          <path d="M1 7l5.500-5.500L12 7" stroke={G} strokeWidth="1.700" />
        </Svg>
        <Svg w={12} h={15} className="ml-[19px]">
          <path d="M0 0h5.500v7H0zM6.500 0H12v7H6.500zM0 8h5.500v4L0 15zM6.500 8H12v7l-5.500-3z" fill="#fff" />
        </Svg>
        <Svg w={12} h={17} className="ml-5">
          <rect x="3" y=".5" width="6" height="10" rx="3" stroke="#b9c8d2" />
          <path d="M.5 7.500c0 7 11 7 11 0M6 13v3.500" stroke="#8ba5b6" />
        </Svg>
        <span className="-mt-0.5 ml-[17px] text-[15.500px] leading-5">英</span>
        <span className="-mt-0.5 ml-[23px] text-[15.500px] leading-5">拼</span>
        <Svg w={17} h={13} className="ml-[21px]">
          <path d="M.5 5a11 11 0 0 1 16 0M3 7.500a8 8 0 0 1 11 0M5.500 10a4 4 0 0 1 6 0" stroke={G} strokeWidth="1.300" />
          <circle cx="8.500" cy="11.500" r="1.500" fill={G} />
        </Svg>
        <Svg w={17} h={14} className="ml-2">
          <path d="M.5 5v4H3l4 4V1L3 5z" stroke={G} />
          <path d="M9.500 4.500q2 2.500 0 5M11.500 2.500q4 4.500 0 9M13.500.500q5.500 6.500 0 13" stroke={G} />
        </Svg>
        <div className="ml-4 w-14 text-right text-[12px] leading-4">
          <div>20:43</div>
          <div>2024/1/25</div>
        </div>
        <Svg w={15} h={16} className="ml-2">
          <path d="M2.500 10V6a5 5 0 0 1 10 0v4l1.500 2.500H1zM5.500 13a2 2 0 0 0 4 0" stroke={G} />
        </Svg>
      </div>
    </div>
  );
}

export default function App() {
  return (
    <div className="relative flex h-[1080px] w-[1920px] flex-col overflow-hidden bg-white font-['Open_Sans','Noto_Sans_CJK_SC',sans-serif] text-[#111c26]">
      <TitleBar />
      <MenuBar />
      <div className="flex h-[952px] shrink-0">
        <Library />
        <main className="flex min-w-0 flex-1 flex-col border-l border-[#64879e]">
          <Tabs />
          <Guest />
        </main>
      </div>
      <StatusBar />
      <HostTaskbar />
      <div className="absolute left-[1427px] top-[32px] flex h-[64px] items-end">
        <span className="whitespace-nowrap font-['Noto_Sans_CJK_SC'] text-[37.700px] font-bold leading-[50px] text-white/75">
          蚁景网络安全教学
        </span>
        <span className="ml-[17px] w-[140px] origin-bottom -rotate-3 scale-y-125 bg-gradient-to-b from-[#e4e3e2] from-45% to-[#f1f1f0] to-55% bg-clip-text font-['Lato'] text-[58px] font-black leading-[60px] tracking-[-2.500px] text-transparent">
          bilibili
        </span>
      </div>
    </div>
  );
}
